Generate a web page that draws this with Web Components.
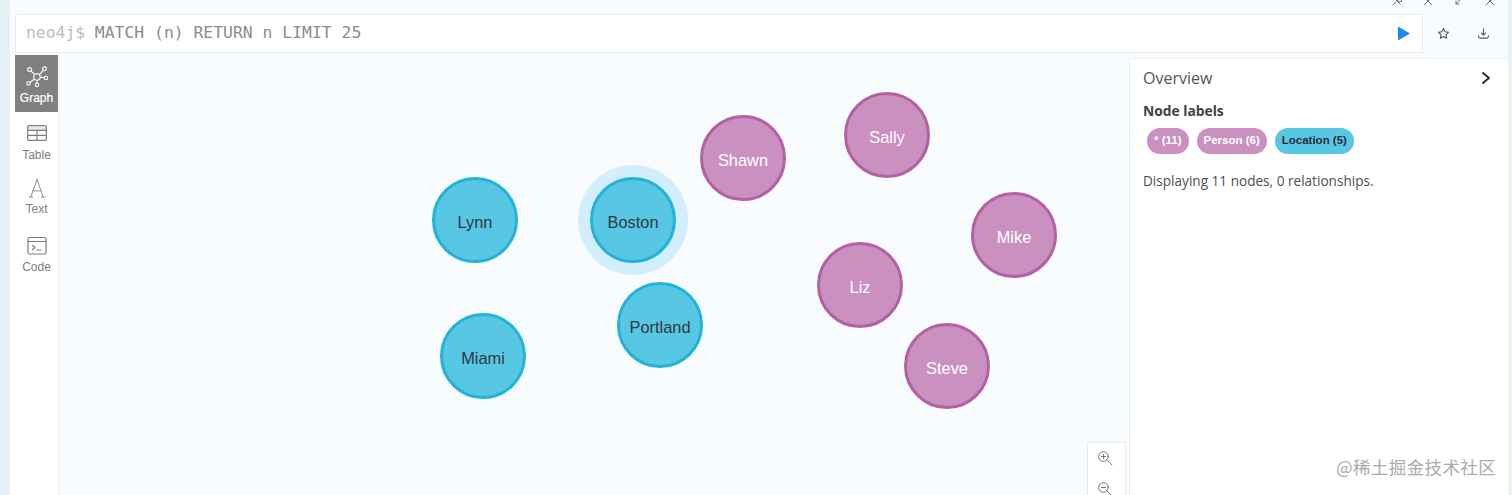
<!DOCTYPE html>
<html><head><meta charset="utf-8"><style>
html,body{margin:0;padding:0;height:100%;overflow:hidden;background:#f9fcff}
</style></head><body>
<neo-app>
  <neo-editor slot="editor"></neo-editor>
  <neo-sidebar slot="sidebar"></neo-sidebar>
  <neo-graph slot="graph"></neo-graph>
  <neo-overview slot="panel"></neo-overview>
</neo-app>
<script>
function def(name, html, setup){
  customElements.define(name, class extends HTMLElement{
    constructor(){super();this.attachShadow({mode:'open'}).innerHTML=html;}
    connectedCallback(){ if(setup) setup(this); }
  });
}
const STROKE='fill="none" stroke="currentColor" stroke-linecap="round" stroke-linejoin="round"';

def('neo-app',`<style>
:host{display:block;width:1512px;height:495px;box-sizing:border-box;background:#f9fcff;overflow:hidden;position:relative;font-family:"Open Sans",sans-serif}
.shell{display:grid;grid-template-columns:10px 1fr 4px;height:495px}
.edge{background:#e6f0f7}
.edge.r{background:#e9f2f8}
.main{display:flex;flex-direction:column;min-width:0;padding:0}
.top{height:55px;flex:none;box-sizing:border-box;padding:14px 0 0 5px}
.body{flex:1;display:flex;min-height:0}
.side{width:49px;flex:none;background:#fff;box-sizing:border-box;padding-left:5px;border-right:1px solid #f1f5f8}
.g{flex:1;min-width:0;position:relative;margin-left:-1px}
.panel{width:379px;flex:none;background:#fff;margin-top:3px;border-left:1px solid #e6ebef;border-top:1px solid #eef2f5;box-sizing:border-box}
.chrome{position:absolute;top:-4px;left:1391px;display:flex;gap:19px;color:#6b7075}
</style>
<div class="shell"><div class="edge"></div>
<div class="main">
  <div class="top"><slot name="editor"></slot></div>
  <div class="body"><div class="side"><slot name="sidebar"></slot></div><div class="g"><slot name="graph"></slot></div><div class="panel"><slot name="panel"></slot></div></div>
</div>
<div class="edge r"></div></div>
<div class="chrome">
<svg width="12" height="10" viewBox="0 0 12 10" ${STROKE} stroke-width="1"><path d="M2 9l3-3M4 3l5 5M7 1l4 4-3 1-2-2z"/></svg>
<svg width="12" height="10" viewBox="0 0 12 10" ${STROKE} stroke-width="1"><path d="M2 1l8 8M10 1l-8 8"/></svg>
<svg width="12" height="10" viewBox="0 0 12 10" ${STROKE} stroke-width="1"><path d="M9 2L3 8M3 5v3h3"/></svg>
<svg width="12" height="10" viewBox="0 0 12 10" ${STROKE} stroke-width="1"><path d="M2 1l8 8M10 1l-8 8"/></svg>
</div>`);

def('neo-editor',`<style>
:host{display:flex;align-items:center;height:39px;font-family:"DejaVu Sans Mono","Liberation Mono",monospace;font-size:16.4px}
.box{width:1408px;height:39px;box-sizing:border-box;background:#fff;border:1px solid #e6ebef;border-radius:2px;display:flex;align-items:center;padding:0 12px 0 10px;flex:none}
.p{color:#bdbdbd;margin-right:9.600px;padding-bottom:2px}
.q{color:#8c8c8c;flex:1;padding-bottom:2px}
.acts{display:flex;flex:none;width:75px;gap:27px;padding-left:14px;box-sizing:border-box;color:#53585d}
</style>
<div class="box"><span class="p">neo4j$</span><span class="q">MATCH (n) RETURN n LIMIT 25</span>
<svg width="12" height="15" viewBox="0 0 12 15"><path d="M0 0.500L12 7.500 0 14.500z" fill="#1a8cf0"/></svg></div>
<div class="acts">
<svg width="13" height="13" viewBox="0 0 14 14" ${STROKE} stroke-width="1.200"><path d="M7 1.500l1.700 3.600 3.800.5-2.800 2.600.7 3.900L7 10.200l-3.400 1.900.7-3.900L1.500 5.600l3.800-.5z"/></svg>
<svg width="13" height="13" viewBox="0 0 14 14" ${STROKE} stroke-width="1.200"><path d="M7 2v6.500M4.800 6.500L7 8.800l2.200-2.300M1.500 9.500c.3 1.800 1 2.500 2 2.500h7c1 0 1.700-.7 2-2.500"/></svg>
</div>`);

def('neo-sidebar',`<style>
:host{display:block;font-family:"Liberation Sans",sans-serif;font-size:12px;color:#7b7f83}
a{display:flex;flex-direction:column;align-items:center;box-sizing:border-box;width:43px}
svg{display:block}
span{line-height:14px}
.active{background:#808080;color:#fff;height:57px;padding-top:11px;gap:3px;-webkit-text-stroke:.2px #fff}
.t{height:55px;padding-top:13px;gap:7px}
.x{height:58px;padding-top:11px;gap:4px}
.c{height:60px;padding-top:11px;gap:4px}
</style>
<a class="active"><svg width="22" height="22" viewBox="0 0 22 22" fill="none" stroke="#fff" stroke-width="1.100">
<circle cx="11" cy="11" r="3.200"/><circle cx="3.500" cy="3.500" r="1.900"/><circle cx="18.500" cy="2.800" r="1.900"/><circle cx="20" cy="12" r="1.700"/><circle cx="11" cy="19" r="1.700"/><circle cx="2.500" cy="17.500" r="1.700"/>
<path d="M5 5l3.700 3.700M17.300 4.300L13.300 8.700M14.200 11.300l4.200.5M11 14.200v3M8.500 13L3.800 16.500"/></svg><span>Graph</span></a>
<a class="t"><svg width="20" height="16" viewBox="0 0 20 16" fill="none" stroke="currentColor" stroke-width="1.200"><rect x=".7" y=".7" width="18.600" height="14.600" rx="1"/><path d="M.7 5.300h18.600M.7 10.300h18.600M10 5.300v10"/><path d="M.7 1.500h18.600v3.800H.7z" fill="currentColor" fill-opacity=".18" stroke="none"/></svg><span>Table</span></a>
<a class="x"><svg width="20" height="20" viewBox="0 0 20 21" fill="none" stroke="currentColor" stroke-width=".9" stroke-linecap="round"><path d="M10 1.500L3.500 20M10 1.500L16.500 20M5.800 13.500h8.400M1.800 20h3.600M14.600 20h3.800"/></svg><span>Text</span></a>
<a class="c"><svg width="20" height="20" viewBox="0 0 20 20" fill="none" stroke="currentColor" stroke-width="1.200" stroke-linecap="round" stroke-linejoin="round"><rect x="1" y="1.500" width="18" height="16.500" rx="1.500"/><path d="M1 5.500h18M5.500 9.500l2.500 2-2.500 2M10 14h4"/></svg><span>Code</span></a>`);

def('neo-node',`<style>
:host{position:absolute;width:86px;height:86px;box-sizing:border-box;border-radius:50%;border:3px solid var(--b);background:var(--f);color:var(--t);padding-top:5px;
display:flex;align-items:center;justify-content:center;font:16.400px "Liberation Sans",sans-serif}
:host([ring]){box-shadow:0 0 0 12px #d2eefc}
</style><slot></slot>`,el=>{
  const k=el.getAttribute('kind'),x=+el.getAttribute('x'),y=+el.getAttribute('y');
  el.style.left=(x-43)+'px';el.style.top=(y-43)+'px';
  const s=el.style;
  if(k==='loc'){s.setProperty('--f','#57c7e3');s.setProperty('--b','#23b3d7');s.setProperty('--t','#323741');}
  else{s.setProperty('--f','#c990c0');s.setProperty('--b','#b261a5');s.setProperty('--t','#fff');}
});

def('neo-graph',`<style>
:host{display:block;position:relative;height:100%;font-family:"Liberation Sans",sans-serif}
.zoom{position:absolute;left:1029px;top:387px;width:39px;height:60px;background:#fff;border:1px solid #e6ebef;border-bottom:none;box-sizing:border-box;display:flex;flex-direction:column;align-items:center;gap:15px;padding:7px 3px 0 0;color:#6f7478}
</style>
<neo-node kind="loc" x="417" y="165">Lynn</neo-node>
<neo-node kind="loc" x="575" y="165" ring>Boston</neo-node>
<neo-node kind="loc" x="425" y="301">Miami</neo-node>
<neo-node kind="loc" x="602" y="270">Portland</neo-node>
<neo-node kind="per" x="685" y="103">Shawn</neo-node>
<neo-node kind="per" x="829" y="80">Sally</neo-node>
<neo-node kind="per" x="956" y="180">Mike</neo-node>
<neo-node kind="per" x="802" y="230">Liz</neo-node>
<neo-node kind="per" x="889" y="311">Steve</neo-node>
<div class="zoom">
<svg width="16" height="16" viewBox="0 0 16 16" ${STROKE} stroke-width="1"><circle cx="6.500" cy="6.500" r="4.800"/><path d="M10 10l5 5M6.500 4.500v4M4.500 6.500h4"/></svg>
<svg width="16" height="16" viewBox="0 0 16 16" ${STROKE} stroke-width="1"><circle cx="6.500" cy="6.500" r="4.800"/><path d="M10 10l5 5M4.500 6.500h4"/></svg>
</div>`);

def('neo-pill',`<style>
:host{display:inline-flex;align-items:center;height:26px;border-radius:13px;padding:0 7px 2px;box-sizing:border-box;font:700 11.500px "Liberation Sans",sans-serif;background:var(--bg,#c990c0);color:var(--fg,#fff);white-space:nowrap}
</style><slot></slot>`);

def('neo-overview',`<style>
:host{display:block;position:relative;height:100%;font-family:"Open Sans",sans-serif;color:#4d4f53;padding:9px 16px 0 13px;box-sizing:border-box}
.head{display:flex;justify-content:space-between;align-items:center;height:20px;font-size:16px;color:#535659;margin-bottom:13px}
h4{margin:0 0 7px;font-size:13.800px;font-weight:700;line-height:20px;color:#3f4144}
.pills{display:flex;gap:8px;padding-left:4px;margin-bottom:18px}
p{margin:0;font-size:13.600px;line-height:18px}
.mark{position:absolute;left:206px;top:395px;font:17.500px "Noto Sans CJK SC","Liberation Sans",sans-serif;color:#a9abad;white-space:nowrap;letter-spacing:.4px}
</style>
<div class="head"><span>Overview</span><svg width="12" height="14" viewBox="0 0 12 14" fill="none" stroke="#23272b" stroke-width="1.800" stroke-linecap="round" stroke-linejoin="round"><path d="M3 2l6 5-6 5"/></svg></div>
<h4>Node labels</h4>
<div class="pills"><neo-pill>* (11)</neo-pill><neo-pill>Person (6)</neo-pill><neo-pill style="--bg:#57c7e3;--fg:#2a2c34">Location (5)</neo-pill></div>
<p>Displaying 11 nodes, 0 relationships.</p>
<div class="mark">@稀土掘金技术社区</div>`);
</script>
</body></html>
